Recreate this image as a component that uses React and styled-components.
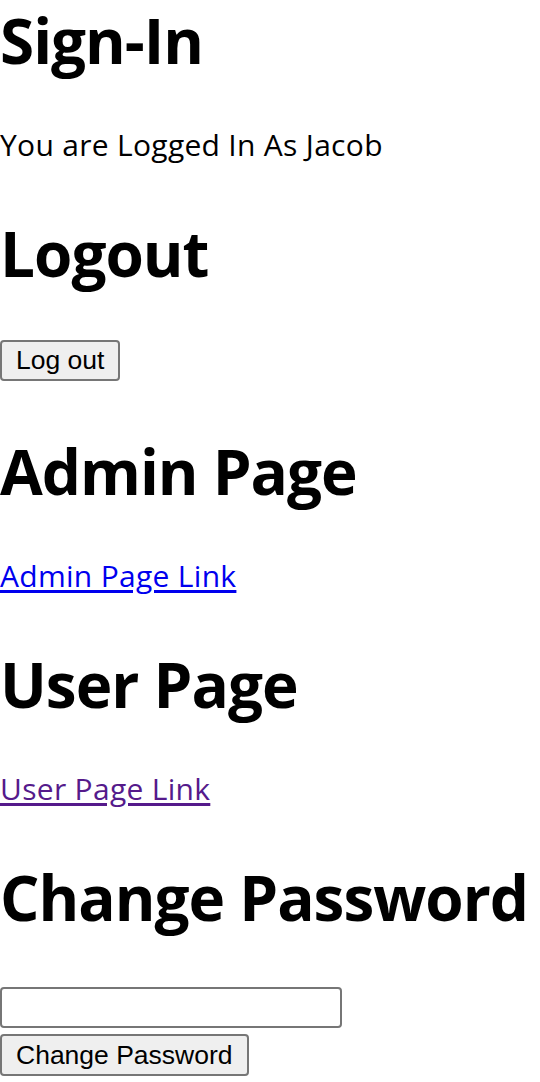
import styled, { createGlobalStyle } from "styled-components";

const GlobalStyle = createGlobalStyle`
  html, body {
    margin: 0;
    padding: 0;
    background: #ffffff;
  }
  body {
    font-family: "Open Sans", "Noto Sans", sans-serif;
    color: #000000;
  }
`;

const Page = styled.div`
  display: block;
  width: 540px;
`;

const Heading = styled.h1`
  font-family: "Open Sans", "Noto Sans", sans-serif;
  font-size: 62px;
  font-weight: 700;
  line-height: 80px;
  letter-spacing: -1px;
  margin: 45px 0;
  white-space: nowrap;

  &:first-child {
    margin-top: 0;
  }
`;

const Text = styled.p`
  font-size: 30px;
  line-height: 40px;
  margin: 45px 0 48px;
  letter-spacing: 0.3px;
`;

const PageLink = styled.a`
  color: ${(p) => (p.$visited ? "#551a8b" : "#0000ee")};
  text-decoration: underline;
  text-underline-offset: 3px;
  cursor: pointer;
`;

const ButtonRow = styled.div`
  margin: 47px 0 50px;
`;

const Button = styled.button`
  font-family: "Liberation Sans", Arial, sans-serif;
  font-size: 26.5px;
  height: ${(p) => p.$height || 41}px;
  padding: 0 14px;
  background: #efefef;
  border: 2px solid #767676;
  border-radius: 4px;
  color: #000000;
  cursor: pointer;
`;

const PasswordForm = styled.form`
  display: flex;
  flex-direction: column;
  align-items: flex-start;
  gap: 6px;
  margin: 50px 0 0;
`;

const PasswordInput = styled.input`
  width: 342px;
  height: 41px;
  box-sizing: border-box;
  border: 2px solid #767676;
  border-radius: 4px;
  padding: 2px 4px;
  font-size: 25px;
  background: #ffffff;
`;

export default function App() {
  return (
    <Page>
      <GlobalStyle />
      <Heading>Sign-In</Heading>
      <Text>You are Logged In As Jacob</Text>

      <Heading>Logout</Heading>
      <ButtonRow>
        <Button type="button">Log out</Button>
      </ButtonRow>

      <Heading>Admin Page</Heading>
      <Text>
        <PageLink href="#admin">Admin Page Link</PageLink>
      </Text>

      <Heading>User Page</Heading>
      <Text>
        <PageLink href="#user" $visited>
          User Page Link
        </PageLink>
      </Text>

      <Heading>Change Password</Heading>
      <PasswordForm onSubmit={(e) => e.preventDefault()}>
        <PasswordInput type="password" />
        <Button type="submit" $height={42}>
          Change Password
        </Button>
      </PasswordForm>
    </Page>
  );
}
